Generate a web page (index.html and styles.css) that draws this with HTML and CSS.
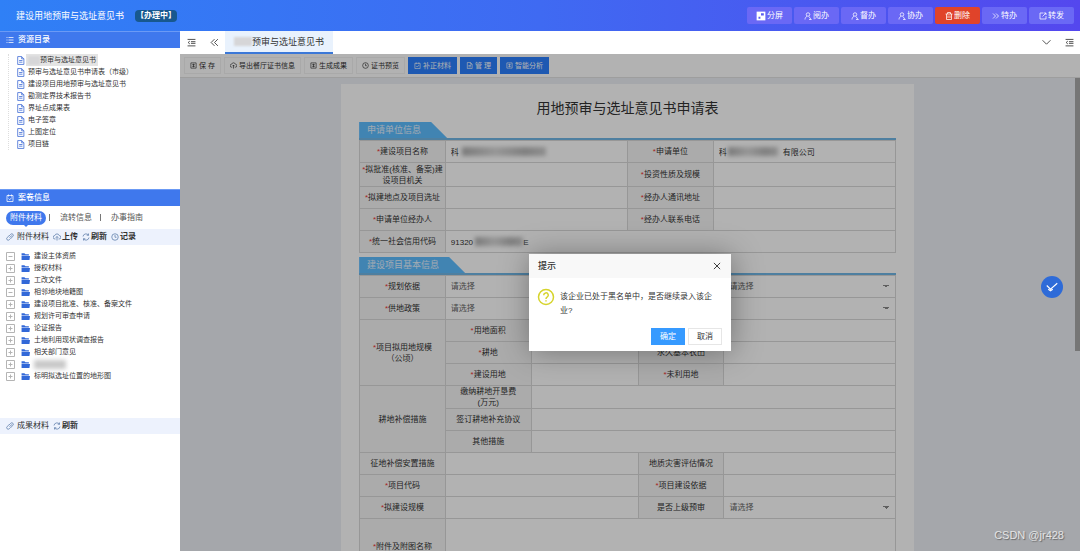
FILE: index.html
```html
<!DOCTYPE html>
<html lang="zh-CN">
<head>
<meta charset="utf-8">
<title>建设用地预审与选址意见书</title>
<link rel="stylesheet" href="styles.css">
</head>
<body>
<svg class="defs" aria-hidden="true">
  <symbol id="i-doc" viewBox="0 0 16 16"><path d="M3 1h7l4 4v10H3zM10 1v4h4M5.500 8h6M5.500 11h6"/></symbol>
  <symbol id="i-user" viewBox="0 0 16 16"><circle cx="8" cy="5" r="3.500"/><path d="M2 15c0-3 2-5.500 4-6.500M10 9l4 6M10 15h5"/></symbol>
  <symbol id="i-box" viewBox="0 0 16 16"><path d="M2 2h12v12H2zM5 6h6M5 10h6M8 4v8"/></symbol>
  <symbol id="i-check" viewBox="0 0 16 16"><path d="M2 3h12v12H2zM5 1v4M11 1v4M5 9l2.500 2.500L11.500 7"/></symbol>
  <symbol id="i-folder" viewBox="0 0 16 16"><path class="solid" d="M1 2h5l2 2h6v2H1zM1 7h15l-1 7H1z"/></symbol>
  <symbol id="i-plus" viewBox="0 0 9 9"><path d="M.5.5h8v8h-8zM2.500 4.500h4M4.500 2.500v4"/></symbol>
  <symbol id="i-minus" viewBox="0 0 9 9"><path d="M.5.5h8v8h-8zM2.500 4.500h4"/></symbol>
  <symbol id="i-link" viewBox="0 0 16 16"><path d="M7 9.500l5-5M6 6l3.500-3.500a3 3 0 0 1 4.300 4.300L10 10.500M10 6.500l-.5-.5M9.500 10.500L6.500 13.500a3 3 0 0 1-4.300-4.300L6 5.500"/></symbol>
  <symbol id="i-cloud" viewBox="0 0 16 16"><path d="M5 12H4a3.500 3.500 0 0 1-.3-7A4.500 4.500 0 0 1 12.300 5 3.500 3.500 0 0 1 12 12h-1M8 15V7M5.500 9.500L8 7l2.500 2.500"/></symbol>
  <symbol id="i-refresh" viewBox="0 0 16 16"><path d="M14 9a6 6 0 0 1-11 2.500M2 7a6 6 0 0 1 11-2.500M3 15v-3.500h3.500M13 1v3.500H9.500"/></symbol>
  <symbol id="i-clock" viewBox="0 0 16 16"><circle cx="8" cy="8" r="6.500"/><path d="M8 4v4.500h3"/></symbol>
  <symbol id="i-list" viewBox="0 0 16 16"><path d="M5 3h10M5 8h10M5 13h10M1 3h2M1 8h2M1 13h2"/></symbol>
  <symbol id="i-fold" viewBox="0 0 16 16"><path d="M1 2.500h14M7 6.500h8M7 9.500h8M1 14h14M5 5.500L2 8l3 2.500"/></symbol>
</svg>

<header class="topbar">
  <h1>建设用地预审与选址意见书</h1>
  <span class="status">【办理中】</span>
  <nav class="actions">
    <button><svg class="ico big" viewBox="0 0 16 16"><path class="solid" d="M1 1h14v14H1z"/><path class="cut" d="M8 3.500h4.500V7H8zM4 9h3v3.500H4z"/></svg>分屏</button>
    <button><svg class="ico"><use href="#i-user"/></svg>阅办</button>
    <button><svg class="ico"><use href="#i-user"/></svg>督办</button>
    <button><svg class="ico"><use href="#i-user"/></svg>协办</button>
    <button class="danger"><svg class="ico" viewBox="0 0 16 16"><path d="M1 4h14M5 4V1h6v3M3 4v11h10V4M6 7v5M10 7v5"/></svg>删除</button>
    <button><svg class="ico" viewBox="0 0 16 16"><path d="M2 3l5 5-5 5M8 3l5 5-5 5"/></svg>特办</button>
    <button><svg class="ico" viewBox="0 0 16 16"><path d="M9 2H2v12h12V8M10 2h4v4M14 2L7 9"/></svg>转发</button>
  </nav>
</header>

<div class="shell">
  <aside class="sidebar">
    <section class="resources">
      <h2 class="side-head"><svg class="ico"><use href="#i-list"/></svg>资源目录</h2>
      <ul class="tree docs">
        <li class="selected"><svg class="ico"><use href="#i-doc"/></svg><span class="mask"></span>预审与选址意见书</li>
        <li><svg class="ico"><use href="#i-doc"/></svg>预审与选址意见书申请表（市级）</li>
        <li><svg class="ico"><use href="#i-doc"/></svg>建设项目用地预审与选址意见书</li>
        <li><svg class="ico"><use href="#i-doc"/></svg>勘测定界技术报告书</li>
        <li><svg class="ico"><use href="#i-doc"/></svg>界址点成果表</li>
        <li><svg class="ico"><use href="#i-doc"/></svg>电子签章</li>
        <li><svg class="ico"><use href="#i-doc"/></svg>上图定位</li>
        <li><svg class="ico"><use href="#i-doc"/></svg>项目链</li>
      </ul>
    </section>
    <section class="files">
      <h2 class="side-head"><svg class="ico"><use href="#i-check"/></svg>案卷信息</h2>
      <div class="side-tabs">
        <button class="active">附件材料</button><i></i><button>流转信息</button><i></i><button>办事指南</button>
      </div>
      <div class="strip">
        <span><svg class="ico"><use href="#i-link"/></svg>附件材料</span>
        <button><svg class="ico"><use href="#i-cloud"/></svg>上传</button>
        <button><svg class="ico"><use href="#i-refresh"/></svg>刷新</button>
        <button><svg class="ico"><use href="#i-clock"/></svg>记录</button>
      </div>
      <ul class="tree folders">
        <li><svg class="tog"><use href="#i-minus"/></svg><svg class="ico"><use href="#i-folder"/></svg>建设主体资质</li>
        <li><svg class="tog"><use href="#i-plus"/></svg><svg class="ico"><use href="#i-folder"/></svg>授权材料</li>
        <li><svg class="tog"><use href="#i-plus"/></svg><svg class="ico"><use href="#i-folder"/></svg>工改文件</li>
        <li><svg class="tog"><use href="#i-minus"/></svg><svg class="ico"><use href="#i-folder"/></svg>相邻地块地籍图</li>
        <li><svg class="tog"><use href="#i-plus"/></svg><svg class="ico"><use href="#i-folder"/></svg>建设项目批准、核准、备案文件</li>
        <li><svg class="tog"><use href="#i-plus"/></svg><svg class="ico"><use href="#i-folder"/></svg>规划许可审查申请</li>
        <li><svg class="tog"><use href="#i-plus"/></svg><svg class="ico"><use href="#i-folder"/></svg>论证报告</li>
        <li><svg class="tog"><use href="#i-plus"/></svg><svg class="ico"><use href="#i-folder"/></svg>土地利用现状调查报告</li>
        <li><svg class="tog"><use href="#i-plus"/></svg><svg class="ico"><use href="#i-folder"/></svg>相关部门意见</li>
        <li><svg class="tog"><use href="#i-plus"/></svg><svg class="ico"><use href="#i-folder"/></svg><span class="mask wide"></span></li>
        <li><svg class="tog"><use href="#i-plus"/></svg><svg class="ico"><use href="#i-folder"/></svg>标明拟选址位置的地形图</li>
      </ul>
    </section>
    <section>
      <div class="strip">
        <span><svg class="ico"><use href="#i-link"/></svg>成果材料</span>
        <button><svg class="ico"><use href="#i-refresh"/></svg>刷新</button>
      </div>
    </section>
  </aside>

  <main class="main">
    <div class="tabbar">
      <button aria-label="折叠菜单"><svg class="ico"><use href="#i-fold"/></svg></button>
      <button aria-label="向左"><svg class="ico" viewBox="0 0 16 16"><path d="M8 2L2 8l6 6M14 2L8 8l6 6"/></svg></button>
      <button class="tab"><span class="mask"></span>预审与选址意见书</button>
      <span class="grow"></span>
      <button aria-label="更多"><svg class="ico" viewBox="0 0 16 16"><path d="M1 4l7 7 7-7"/></svg></button>
      <button aria-label="列表"><svg class="ico"><use href="#i-fold"/></svg></button>
    </div>

    <div class="frame">
      <div class="toolbar">
        <button><svg class="ico"><use href="#i-box"/></svg>保 存</button>
        <button><svg class="ico"><use href="#i-cloud"/></svg>导出餐厅证书信息</button>
        <button><svg class="ico"><use href="#i-box"/></svg>生成成果</button>
        <button><svg class="ico"><use href="#i-clock"/></svg>证书预览</button>
        <button class="primary"><svg class="ico"><use href="#i-check"/></svg>补正材料</button>
        <button class="primary"><svg class="ico"><use href="#i-doc"/></svg>管 理</button>
        <button class="primary"><svg class="ico"><use href="#i-box"/></svg>智能分析</button>
      </div>
      <div class="canvas">
        <form class="paper">
          <h2>用地预审与选址意见书申请表</h2>
          <h3><span>申请单位信息</span></h3>
          <table class="applicant">
            <colgroup><col class="w16"><col class="w34"><col class="w16"><col class="w34"></colgroup>
            <tr><th class="req"><label for="a1">建设项目名称</label></th><td><input id="a1" value="科"><span class="smudge s1"></span></td><th class="req"><label for="a2">申请单位</label></th><td><input id="a2" value="科　　　　　　　有限公司"><span class="smudge s2"></span></td></tr>
            <tr class="tall"><th class="req"><label for="a3">拟批准(核准、备案)建设项目机关</label></th><td><input id="a3"></td><th class="req"><label for="a4">投资性质及规模</label></th><td><input id="a4"></td></tr>
            <tr><th class="req"><label for="a5">拟建地点及项目选址</label></th><td><input id="a5"></td><th class="req"><label for="a6">经办人通讯地址</label></th><td><input id="a6"></td></tr>
            <tr><th class="req"><label for="a7">申请单位经办人</label></th><td><input id="a7"></td><th class="req"><label for="a8">经办人联系电话</label></th><td><input id="a8"></td></tr>
            <tr><th class="req"><label for="a9">统一社会信用代码</label></th><td colspan="3"><input id="a9" value="91320　　　　　　 E"><span class="smudge s3"></span></td></tr>
          </table>
          <h3><span>建设项目基本信息</span></h3>
          <table>
            <colgroup><col class="w16"><col class="w16"><col class="w20"><col class="w16"><col class="w32"></colgroup>
            <tr><th class="req"><label for="b1">规划依据</label></th><td colspan="2"><select id="b1"><option>请选择</option></select></td><th></th><td><select aria-label="请选择"><option>请选择</option></select></td></tr>
            <tr><th class="req"><label for="b2">供地政策</label></th><td colspan="2"><select id="b2"><option>请选择</option></select></td><th></th><td><select aria-label="请选择"><option></option></select></td></tr>
            <tr><th class="req" rowspan="3"><label for="b3">项目拟用地规模<br>（公顷）</label></th><th class="req"><label for="b3">用地面积</label></th><td><input id="b3"></td><th></th><td></td></tr>
            <tr><th class="req"><label for="b4">耕地</label></th><td><input id="b4"></td><th><label for="b5">永久基本农田</label></th><td><input id="b5"></td></tr>
            <tr><th class="req"><label for="b6">建设用地</label></th><td><input id="b6"></td><th class="req"><label for="b7">未利用地</label></th><td><input id="b7"></td></tr>
            <tr><th rowspan="3">耕地补偿措施</th><th><label for="b8">缴纳耕地开垦费<br>(万元)</label></th><td colspan="3"><input id="b8"></td></tr>
            <tr><th><label for="b9">签订耕地补充协议</label></th><td colspan="3"><input id="b9"></td></tr>
            <tr><th><label for="b10">其他措施</label></th><td colspan="3"><input id="b10"></td></tr>
            <tr><th><label for="b11">征地补偿安置措施</label></th><td colspan="2"><input id="b11"></td><th><label for="b12">地质灾害评估情况</label></th><td><input id="b12"></td></tr>
            <tr><th class="req"><label for="b13">项目代码</label></th><td colspan="2"><input id="b13"></td><th class="req"><label for="b14">项目建设依据</label></th><td><input id="b14"></td></tr>
            <tr><th class="req"><label for="b15">拟建设规模</label></th><td colspan="2"><input id="b15"></td><th><label for="b16">是否上级预审</label></th><td><select id="b16"><option>请选择</option></select></td></tr>
            <tr class="area"><th class="req"><label for="b17">附件及附图名称</label></th><td colspan="4"><textarea id="b17"></textarea></td></tr>
          </table>
        </form>
      </div>
      <div class="scrollbar"></div>
      <div class="shade"></div>
      <button class="float" aria-label="快捷办理"><svg viewBox="0 0 16 16"><path d="M1 6l5 5L15 3M3 11l3 2 3-2"/></svg></button>
      <span class="watermark">CSDN @jr428</span>
    </div>
  </main>
</div>

<div class="dialog" role="dialog" aria-labelledby="dt">
  <div class="dialog-head"><strong id="dt">提示</strong><button aria-label="关闭"><svg class="ico" viewBox="0 0 16 16"><path d="M3 3l10 10M13 3L3 13"/></svg></button></div>
  <div class="dialog-body"><svg class="ask" viewBox="0 0 18 18"><circle cx="9" cy="9" r="7.500"/><path d="M6.700 7.200a2.300 2.300 0 1 1 3.400 2C9.300 9.700 9 10 9 11M9 12.300v1.300"/></svg><p>该企业已处于黑名单中，是否继续录入该企业?</p></div>
  <div class="dialog-foot"><button class="ok">确定</button><button>取消</button></div>
</div>
</body>
</html>
```

FILE: styles.css
```css
* { box-sizing: border-box; }
body {
  margin: 0;
  height: 100vh;
  display: flex;
  flex-direction: column;
  overflow: hidden;
  background: #fff;
  color: #333;
  font: 8px/12px "Liberation Sans", "Noto Sans CJK SC", sans-serif;
}
h1, h2, h3, ul, p { margin: 0; padding: 0; font-weight: normal; }
ul { list-style: none; }
button, input, select, textarea { font: inherit; color: inherit; border: 0; background: none; padding: 0; margin: 0; }
button { display: flex; align-items: center; justify-content: center; white-space: nowrap; }
.defs { position: absolute; width: 0; height: 0; }
svg { fill: none; stroke: currentColor; stroke-width: 1.5; flex: none; }
.ico { width: 8px; height: 8px; }
.solid { fill: currentColor; stroke: none; }
.cut { fill: #5b5cf0; stroke: none; }
.mask { width: 18px; height: 9px; background: #d6d6d8; filter: blur(1px); }
.mask.wide { width: 32px; background: #c9c9c9; filter: blur(2px); }

.topbar {
  flex: none;
  height: 31px;
  display: flex;
  align-items: center;
  padding: 0 6px 0 16px;
  color: #fff;
  background: linear-gradient(90deg, #2f80f6, #3f6af2 50%, #5447ee);
}
.topbar h1 { font-size: 9px; }
.status { margin-left: 11px; padding: 0 1px; border-radius: 4px; background: #17588f; font-weight: bold; white-space: nowrap; }
.actions { margin-left: auto; display: flex; gap: 2px; }
.actions button { width: 45px; height: 17px; gap: 1px; border-radius: 2px; background: #6a68f5; }
.actions .big { width: 10px; height: 10px; }
.actions .danger { background: #e0432a; }

.shell { flex: 1; min-height: 0; display: flex; }
.sidebar { flex: none; width: 180px; display: flex; flex-direction: column; }
.resources { height: 158px; }
.files { height: 229px; }
.side-head { display: flex; align-items: center; gap: 4px; height: 17px; padding-left: 6px; color: #fff; background: #3f78ed; border-top: 1px solid #6b9af5; font-size: 8px; font-weight: 500; }
.tree { font-size: 7px; }
.tree li { display: flex; align-items: center; height: 12px; white-space: nowrap; }
.docs { margin: 6px 0 0 8px; border-left: 1px dotted #ddd; padding-left: 7px; }
.docs li { gap: 3px; width: max-content; padding-right: 2px; }
.docs .ico { width: 9px; height: 9px; color: #4b74d8; }
.docs .mask { width: 12px; margin-right: -3px; }
.docs .selected { background: linear-gradient(90deg, transparent 10px, #e4e4e4 10px); }
.folders { padding: 5px 0 0 6px; }
.folders .tog { width: 9px; height: 9px; margin-right: 6px; color: #b4b4b4; stroke-width: 1; }
.folders .ico { width: 9px; height: 9px; margin-right: 4px; color: #3268d8; }
.side-tabs { display: flex; align-items: center; height: 23px; padding-left: 6px; color: #555; }
.side-tabs i { width: 1px; height: 7px; background: #777; margin: 0 10px 0 3px; }
.side-tabs button + i + button + i { margin: 0 10px 0 8px; }
.side-tabs .active { position: relative; height: 14px; padding: 0 4px; border-radius: 7px; color: #fff; background: #3f78ed; }
.side-tabs .active::after { content: ""; position: absolute; top: 13px; left: 17px; border: 3px solid transparent; border-top-color: #3f78ed; border-bottom: 0; }
.strip { display: flex; align-items: center; gap: 4px; height: 16px; padding-left: 6px; background: #edf2fd; }
.strip span { display: flex; align-items: center; gap: 3px; }
.strip .ico { color: #5b7ba8; }
.strip button { font-weight: bold; gap: 1px; }

.main { flex: 1; min-width: 0; display: flex; flex-direction: column; }
.tabbar { flex: none; display: flex; height: 23px; gap: 14px; padding: 0 6px 0 7px; }
.tabbar .ico { width: 9px; height: 9px; }
.tabbar .tab { margin-left: -8px; padding: 0 9px; font-size: 9px; background: #e9f2fd; border-bottom: 2px solid #3b78d8; }
.grow { flex: 1; }

.frame { position: relative; flex: 1; min-height: 0; display: flex; flex-direction: column; background: #ecf0f5; overflow: hidden; }
.toolbar { flex: none; display: flex; align-items: center; gap: 3px; height: 24px; padding-left: 4px; background: #fff; border-bottom: 1px solid #e2e2e2; font-size: 7px; }
.toolbar button { height: 17px; padding: 0 5px; gap: 2px; border: 1px solid #f2f2f2; }
.toolbar .ico { width: 7px; height: 7px; }
.toolbar .primary { color: #fff; background: #2b80ff; border-color: #2b80ff; }
.canvas { flex: 1; min-height: 0; overflow: hidden; padding: 6px 5px 0 0; }
.paper { width: 64%; margin: 0 auto; padding: 10px 18px; background: #fff; }
.paper h2 { height: 28px; font-size: 14px; line-height: 28px; text-align: center; }
.paper h3 { border-bottom: 2px solid #70b6e6; font-size: 9px; line-height: 16px; color: #e8f4ff; }
.paper h3 span { display: inline-block; vertical-align: top; padding: 0 26px 0 8px; background: #5ebdff; clip-path: polygon(0 0, calc(100% - 16px) 0, 100% 100%, 0 100%); }
table { width: 100%; table-layout: fixed; border-collapse: collapse; }
.applicant { margin-bottom: 4px; }
.w16 { width: 16%; } .w20 { width: 20%; } .w32 { width: 32%; } .w34 { width: 34%; }
tr { height: 22px; }
.tall { height: 24px; }
.area { height: 56px; }
th, td { padding: 0; border: 1px solid #d8d8d8; line-height: 11px; }
th { font-weight: normal; background: #f5f5f5; text-align: center; }
.req label::before { content: "*"; color: #e33; }
td { position: relative; }
td input, td select, td textarea { display: block; width: 100%; height: 18px; padding: 0 5px; }
td textarea { height: 50px; resize: none; }
td select {
  appearance: none;
  color: #666;
  background:
    linear-gradient(to bottom right, #888 50%, transparent 50%) no-repeat right 6px center / 3px 3px,
    linear-gradient(to bottom left, #888 50%, transparent 50%) no-repeat right 9px center / 3px 3px;
}
.smudge { position: absolute; top: 6px; height: 9px; background: linear-gradient(90deg, #b0b0b0, #d8d8d8 40%, #b8b8b8 75%, #ccc); filter: blur(2px); }
.s1 { left: 16px; width: 84px; }
.s2 { left: 14px; width: 50px; }
.s3 { left: 29px; width: 48px; }
.scrollbar { position: absolute; right: 0; top: 24px; width: 5px; height: 55%; background: #aaa; }
.shade { position: absolute; inset: 0; background: rgba(0, 0, 0, .3); }
.float { position: absolute; right: 17px; top: 222px; width: 22px; height: 22px; border-radius: 50%; color: #fff; background: #2e6bd8; }
.float svg { width: 12px; height: 12px; }
.watermark { position: absolute; right: 16px; bottom: 8px; color: #e4e4e4; font-size: 11px; line-height: 16px; text-shadow: 1px 1px 1px #666; }

.dialog { position: absolute; left: 529px; top: 254px; width: 202px; background: #fff; box-shadow: 1px 1px 28px rgba(0, 0, 0, .35); }
.dialog-head { display: flex; align-items: center; justify-content: space-between; height: 24px; padding: 0 9px; background: #f8f8f8; font-size: 9px; }
.dialog-head strong { font-weight: 500; }
.dialog-head .ico { width: 10px; height: 10px; }
.dialog-body { display: flex; gap: 5px; padding: 10px 16px 0 8px; }
.dialog-body p { padding-top: 2px; line-height: 14px; }
.ask { width: 18px; height: 18px; color: #d6d42c; }
.dialog-foot { display: flex; justify-content: flex-end; gap: 3px; padding: 10px 9px 6px; }
.dialog-foot button { width: 34px; height: 17px; border: 1px solid #e6e6e6; }
.dialog-foot .ok { color: #fff; background: #369aff; border-color: #369aff; }
```
